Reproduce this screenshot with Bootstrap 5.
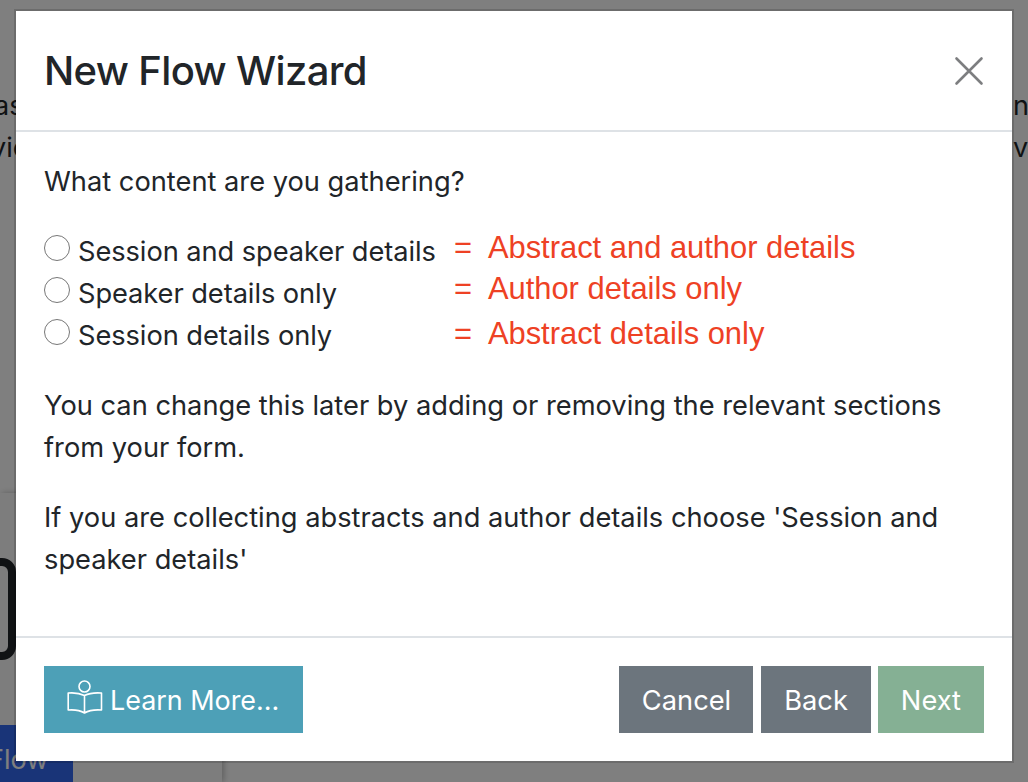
<!DOCTYPE html>
<html lang="en"><head><meta charset="utf-8"><title>New Flow Wizard</title>
<link href="https://cdn.jsdelivr.net/npm/bootstrap@5.3.0/dist/css/bootstrap.min.css" rel="stylesheet">
<style>
html,body{height:782px;overflow:hidden}
body{font-family:Inter,"Liberation Sans",sans-serif;font-size:27.25px;line-height:42px;color:#212529;background:#fff;position:relative}
.behind{position:absolute;inset:0;color:#212529;font-size:27px}
.bt{position:absolute;line-height:42px}
.bt-a{left:-6px;top:85px}.bt-b{left:-9px;top:127px}.bt-c{left:1013px;top:85px}.bt-d{left:1013px;top:127px}
.bframe{position:absolute;left:-30px;top:558px;width:46px;height:102px;border:8px solid #212529;border-radius:14px}
.bpanel{position:absolute;left:0;top:493px;width:222px;height:289px;background:#fbfbfb;box-shadow:2px 0 6px rgba(0,0,0,.25)}
.bflow{position:absolute;left:0;top:725px;width:73px;height:57px;background:#3269f0;color:#fff;padding:14px 0 0 0;overflow:hidden;text-indent:-12px}
.shade{position:absolute;inset:0;background:rgba(0,0,0,.5)}
.wiz{position:absolute;left:16px;top:11px;width:996px;height:750px;border-radius:0;border:0;background:#fff;box-shadow:0 0 0 2px rgba(0,0,0,.15);display:flex;flex-direction:column}
.wiz .modal-header{height:121px;padding:0 28px;border-bottom:2px solid #dee2e6;border-radius:0;flex:none}
.wiz .modal-title{font-size:40px;line-height:46px;font-weight:500;letter-spacing:-.65px;color:#212529}
.xbtn{width:30px;height:30px;background:none;border:0;padding:0;margin:0;display:block}
.xbtn svg{display:block}
.wiz .modal-body{padding:29px 28px 0;flex:1 1 auto}
.wiz p{margin:0 0 28px}
.optrow{display:flex;margin-bottom:28px;height:126px}
.opts .form-check{min-height:0;margin:0;padding:0;height:42px;display:flex}
.opts .form-check-input{width:26px;height:26px;margin:4px 8px 0 0;float:none;flex:none;border:1.5px solid #777;background-color:#fff}
.opts .form-check-label{white-space:nowrap;letter-spacing:-.07px}
.eqs{color:#ee4124;margin-left:18px;position:relative;font-family:"Liberation Sans",Arial,sans-serif;font-size:30.9px}
.eqline{position:absolute;left:0;white-space:nowrap;display:flex}
.eqline .eqsign{width:34px}
.wiz .modal-footer{height:125px;padding:28px;border-top:2px solid #dee2e6;border-radius:0;flex:none;display:flex;justify-content:flex-start;gap:0;flex-wrap:nowrap;align-items:flex-start}
.wiz .modal-footer>*{margin:0}
.wbtn{height:67px;border-radius:0;border:0;font-size:27.25px;line-height:42px;padding:2px 23px 0;color:#fff;display:inline-flex;align-items:center}
.wbtn-learn{background:#4da0b7;margin-right:auto!important;font-size:26.9px;padding:0 24px 0 23px}
.wbtn-learn svg{width:37px;height:40px;margin:0 6px 0 0;flex:none}
.wbtn-grey{background:#6c757d}
.wbtn-cancel{padding-left:22.5px;padding-right:22px}
.wbtn-next:disabled{opacity:1;color:#fff;background:#85b094}
.gap-back{margin-left:8px!important}
.gap-next{margin-left:7px!important}
</style></head>
<body>
<div class="behind">
<div class="bt bt-a">as</div><div class="bt bt-b">vic</div><div class="bt bt-c">n</div><div class="bt bt-d">v</div>
<div class="bpanel"></div><div class="bframe"></div><div class="bflow">Flow</div>
</div>
<div class="shade"></div>
<div class="modal-content wiz">
<div class="modal-header">
<h5 class="modal-title">New Flow Wizard</h5>
<button type="button" class="xbtn ms-auto" aria-label="Close"><svg viewBox="0 0 30 30" width="30" height="30"><path d="M2.500 2.500 27.500 27.500M27.500 2.500 2.500 27.500" stroke="#7d7e80" stroke-width="2.600" stroke-linecap="round" fill="none"/></svg></button>
</div>
<div class="modal-body">
<p>What content are you gathering?</p>
<div class="optrow">
<div class="opts">
<div class="form-check"><input class="form-check-input" type="radio" name="c" id="o1"><label class="form-check-label" for="o1">Session and speaker details</label></div>
<div class="form-check"><input class="form-check-input" type="radio" name="c" id="o2"><label class="form-check-label" for="o2">Speaker details only</label></div>
<div class="form-check"><input class="form-check-input" type="radio" name="c" id="o3"><label class="form-check-label" for="o3">Session details only</label></div>
</div>
<div class="eqs">
<div class="eqline" style="top:-4px"><span class="eqsign">=</span><span>Abstract and author details</span></div>
<div class="eqline" style="top:37px"><span class="eqsign">=</span><span>Author details only</span></div>
<div class="eqline" style="top:82px"><span class="eqsign">=</span><span>Abstract details only</span></div>
</div>
</div>
<p>You can change this later by adding or removing the relevant sections from your form.</p>
<p>If you are collecting abstracts and author details choose 'Session and speaker details'</p>
</div>
<div class="modal-footer">
<button type="button" class="btn wbtn wbtn-learn"><svg viewBox="0 0 37 40" fill="none" stroke="#fff" stroke-width="1.600" stroke-linejoin="round" stroke-linecap="round"><circle cx="17.500" cy="6.500" r="5.500"/><path d="M17.500 15.500c-5-2.500-10.500-3-16.300-2.500v17c5.800-.5 11.300 0 16.300 3 5-3 10.500-3.500 17-3V13c-6.500-.5-12 0-17 2.500V33"/></svg>Learn More...</button>
<button type="button" class="btn wbtn wbtn-grey wbtn-cancel">Cancel</button>
<button type="button" class="btn wbtn wbtn-grey gap-back">Back</button>
<button type="button" class="btn wbtn wbtn-next gap-next" disabled>Next</button>
</div>
</div>
<script src="https://cdn.jsdelivr.net/npm/bootstrap@5.3.0/dist/js/bootstrap.bundle.min.js"></script>
</body></html>
